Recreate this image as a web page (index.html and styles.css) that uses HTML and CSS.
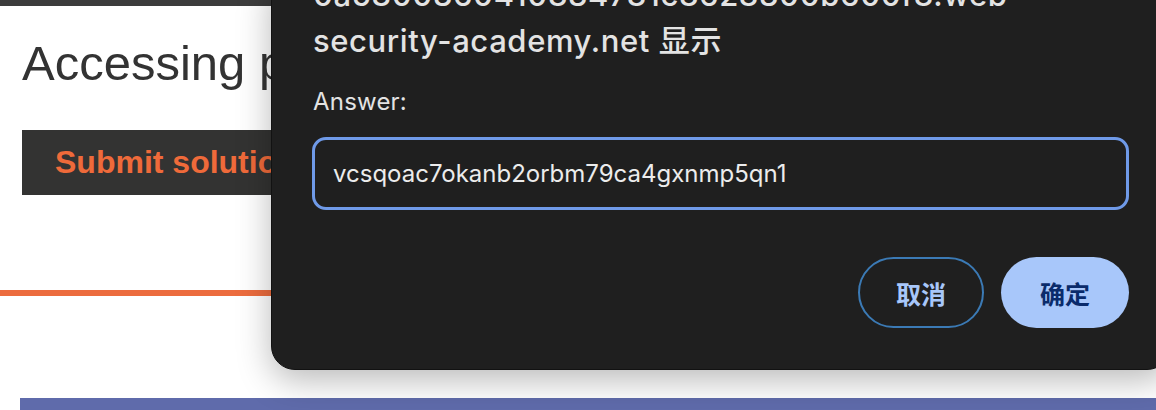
FILE: index.html
```html
<!DOCTYPE html>
<html lang="en">
<head>
<meta charset="utf-8">
<title>Accessing private GraphQL posts</title>
<link rel="stylesheet" href="styles.css">
</head>
<body>
  <div class="topbar"></div>
  <div class="page">
    <h2 class="heading">Accessing private GraphQL posts</h2>
    <button class="submit">Submit solution</button>
  </div>
  <div class="rule"></div>
  <div class="footer-bar"></div>

  <div class="dialog">
    <div class="dialog-title">0a5800360410834781c8628300b600f8.web<br>security-academy.net 显示</div>
    <div class="dialog-label">Answer:</div>
    <div class="dialog-input">vcsqoac7okanb2orbm79ca4gxnmp5qn1</div>
    <div class="dialog-actions">
      <button class="btn btn-cancel">取消</button>
      <button class="btn btn-ok">确定</button>
    </div>
  </div>
</body>
</html>
```

FILE: styles.css
```css
html, body {
  margin: 0;
  padding: 0;
  width: 1156px;
  height: 410px;
  overflow: hidden;
  background: #ffffff;
  font-family: "Liberation Sans", Arial, sans-serif;
  position: relative;
}

.topbar {
  height: 6px;
  background: #3c3c3c;
}

.page {
  padding: 28px 0 0 22px;
}

.heading {
  margin: 0;
  font-size: 49px;
  line-height: 58px;
  font-weight: 400;
  color: #333333;
  white-space: nowrap;
}

.submit {
  display: block;
  margin-top: 38px;
  height: 65px;
  padding: 0 33px;
  border: none;
  background: #333332;
  color: #ef6a3a;
  font-family: "Liberation Sans", Arial, sans-serif;
  font-size: 32px;
  font-weight: 700;
  white-space: nowrap;
  text-align: left;
}

.rule {
  margin-top: 95px;
  height: 6px;
  background: #ec6c3e;
}

.footer-bar {
  margin: 102px 0 0 20px;
  height: 12px;
  background: #5f6bab;
}

.dialog {
  position: absolute;
  left: 271px;
  bottom: 40px;
  width: 900px;
  box-sizing: border-box;
  padding: 0 41px 41px 40px;
  background: #1f1f1f;
  border-radius: 24px;
  border: 1px solid #121212;
  box-shadow: 0 10px 34px rgba(0, 0, 0, 0.28);
  font-family: Inter, "Noto Sans CJK SC", sans-serif;
  color: #e3e3e3;
  display: flex;
  flex-direction: column;
}

.dialog-title {
  padding-left: 1px;
  font-size: 31px;
  line-height: 46px;
  font-weight: 500;
  letter-spacing: 0.6px;
}

.dialog-label {
  margin-top: 23px;
  padding-left: 1px;
  font-size: 24px;
  line-height: 30px;
  letter-spacing: 0.2px;
}

.dialog-input {
  margin-top: 20px;
  height: 67px;
  border: 3px solid #6f9ae8;
  border-radius: 14px;
  padding: 0 18px;
  display: flex;
  align-items: center;
  font-size: 24px;
  color: #ececec;
}

.dialog-actions {
  margin-top: 47px;
  display: flex;
  justify-content: flex-end;
  gap: 17px;
}

.btn {
  height: 71px;
  border-radius: 36px;
  font-family: Inter, "Noto Sans CJK SC", sans-serif;
  font-size: 25px;
  font-weight: 700;
  padding: 0;
}

.btn-cancel {
  width: 126px;
  background: transparent;
  border: 2px solid #3b7ab5;
  color: #a8c7fa;
}

.btn-ok {
  width: 128px;
  background: #a8c7fa;
  border: none;
  color: #0a2b6b;
}
```
